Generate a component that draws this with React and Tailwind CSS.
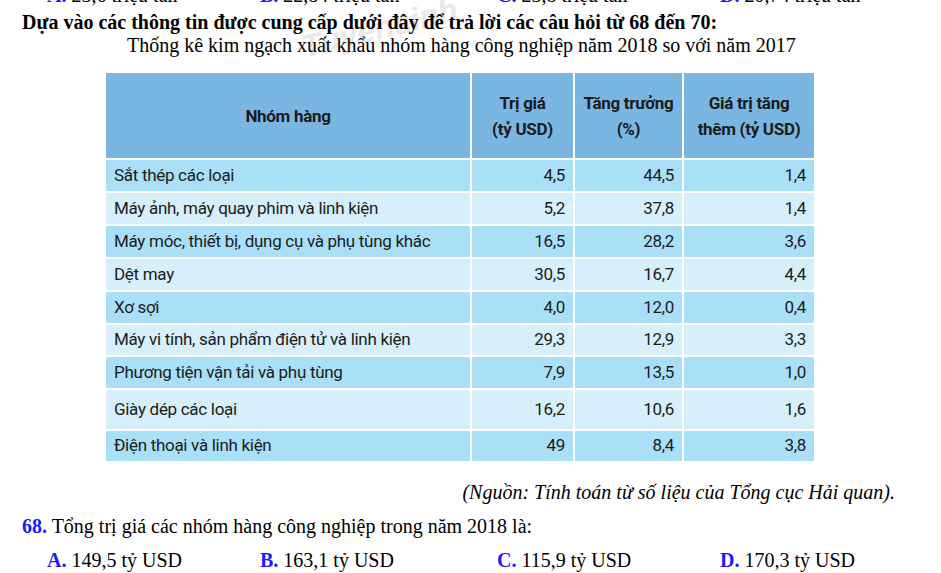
import React from 'react'

const rows = [
  { name: 'Sắt thép các loại', value: '4,5', growth: '44,5', added: '1,4', h: 'h-[33px]' },
  { name: 'Máy ảnh, máy quay phim và linh kiện', value: '5,2', growth: '37,8', added: '1,4', h: 'h-[33px]' },
  { name: 'Máy móc, thiết bị, dụng cụ và phụ tùng khác', value: '16,5', growth: '28,2', added: '3,6', h: 'h-[33px]' },
  { name: 'Dệt may', value: '30,5', growth: '16,7', added: '4,4', h: 'h-[33px]' },
  { name: 'Xơ sợi', value: '4,0', growth: '12,0', added: '0,4', h: 'h-[33px]' },
  { name: 'Máy vi tính, sản phẩm điện tử và linh kiện', value: '29,3', growth: '12,9', added: '3,3', h: 'h-[32px]' },
  { name: 'Phương tiện vận tải và phụ tùng', value: '7,9', growth: '13,5', added: '1,0', h: 'h-[33px]' },
  { name: 'Giày dép các loại', value: '16,2', growth: '10,6', added: '1,6', h: 'h-[41px]' },
  { name: 'Điện thoại và linh kiện', value: '49', growth: '8,4', added: '3,8', h: 'h-[32px]' },
]

const answers = [
  { key: 'A.', text: '149,5 tỷ USD', w: 'w-[213px]' },
  { key: 'B.', text: '163,1 tỷ USD', w: 'w-[237px]' },
  { key: 'C.', text: '115,9 tỷ USD', w: 'w-[223px]' },
  { key: 'D.', text: '170,3 tỷ USD', w: 'w-[180px]' },
]

const prevAnswers = [
  { key: 'A.', text: '23,6 triệu tấn', w: 'w-[213px]' },
  { key: 'B.', text: '22,84 triệu tấn', w: 'w-[237px]' },
  { key: 'C.', text: '23,8 triệu tấn', w: 'w-[223px]' },
  { key: 'D.', text: '20,74 triệu tấn', w: 'w-[180px]' },
]

const narrow = "font-['Roboto','Liberation_Sans',sans-serif]"

export default function App() {
  return (
    <div className="relative h-[573px] w-[941px] overflow-hidden bg-white font-['Liberation_Serif','Times_New_Roman',serif] text-black">
      {/* previous question's answers, cut off at the top */}
      <div className="h-[6px] overflow-hidden">
        <div className="-mt-[16px] flex pl-[47px] text-[20px] leading-[22px]">
          {prevAnswers.map((a) => (
            <div key={a.key} className={a.w}>
              <span className="font-bold text-[#1a1aff]">{a.key}</span> {a.text}
            </div>
          ))}
        </div>
      </div>

      <div className="pointer-events-none absolute left-[300px] top-[4px] -rotate-[14deg] font-['Liberation_Sans',sans-serif] text-[32px] font-bold italic text-[#d4d4d4] opacity-50">
        Tuyensinh
      </div>

      <h1 className="relative mt-[5px] pl-[22px] text-[20px] font-bold leading-[22px]">
        Dựa vào các thông tin được cung cấp dưới đây để trả lời các câu hỏi từ 68 đến 70:
      </h1>
      <p className="relative pl-[127px] text-[20px] leading-[24px]">
        Thống kê kim ngạch xuất khẩu nhóm hàng công nghiệp năm 2018 so với năm 2017
      </p>

      <div className="ml-[104px] mt-[14px] w-[710px]">
        <table className={`w-full table-fixed border-collapse ${narrow} text-[17px] tracking-[-0.3px] text-[#1b1b1b]`}>
          <colgroup>
            <col className="w-[366px]" />
            <col className="w-[103px]" />
            <col className="w-[109px]" />
            <col className="w-[132px]" />
          </colgroup>
          <thead>
            <tr className="h-[87px] bg-[#7ab6e2] font-bold leading-[26px]">
              <th className="border-2 border-white">Nhóm hàng</th>
              <th className="border-2 border-white">Trị giá<br />(tỷ USD)</th>
              <th className="border-2 border-white">Tăng trưởng<br />(%)</th>
              <th className="border-2 border-white">Giá trị tăng<br />thêm (tỷ USD)</th>
            </tr>
          </thead>
          <tbody>
            {rows.map((r, i) => (
              <tr key={r.name} className={`${r.h} ${i % 2 === 0 ? 'bg-[#aadff8]' : 'bg-[#d6effa]'}`}>
                <td className="border-2 border-white pl-[8px]">{r.name}</td>
                <td className="border-2 border-white pr-[8px] text-right">{r.value}</td>
                <td className="border-2 border-white pr-[8px] text-right">{r.growth}</td>
                <td className="border-2 border-white pr-[8px] text-right">{r.added}</td>
              </tr>
            ))}
          </tbody>
        </table>
      </div>

      <p className="mt-[17px] pr-[46px] text-right text-[20px] italic leading-[24px]">
        (Nguồn: Tính toán từ số liệu của Tổng cục Hải quan).
      </p>

      <p className="mt-[10px] pl-[22px] text-[20px] leading-[24px]">
        <span className="font-bold text-[#1a1aff]">68.</span> Tổng trị giá các nhóm hàng công nghiệp trong năm 2018 là:
      </p>

      <div className="mt-[10px] flex pl-[47px] text-[20px] leading-[24px]">
        {answers.map((a) => (
          <div key={a.key} className={a.w}>
            <span className="font-bold text-[#1a1aff]">{a.key}</span> {a.text}
          </div>
        ))}
      </div>
    </div>
  )
}
